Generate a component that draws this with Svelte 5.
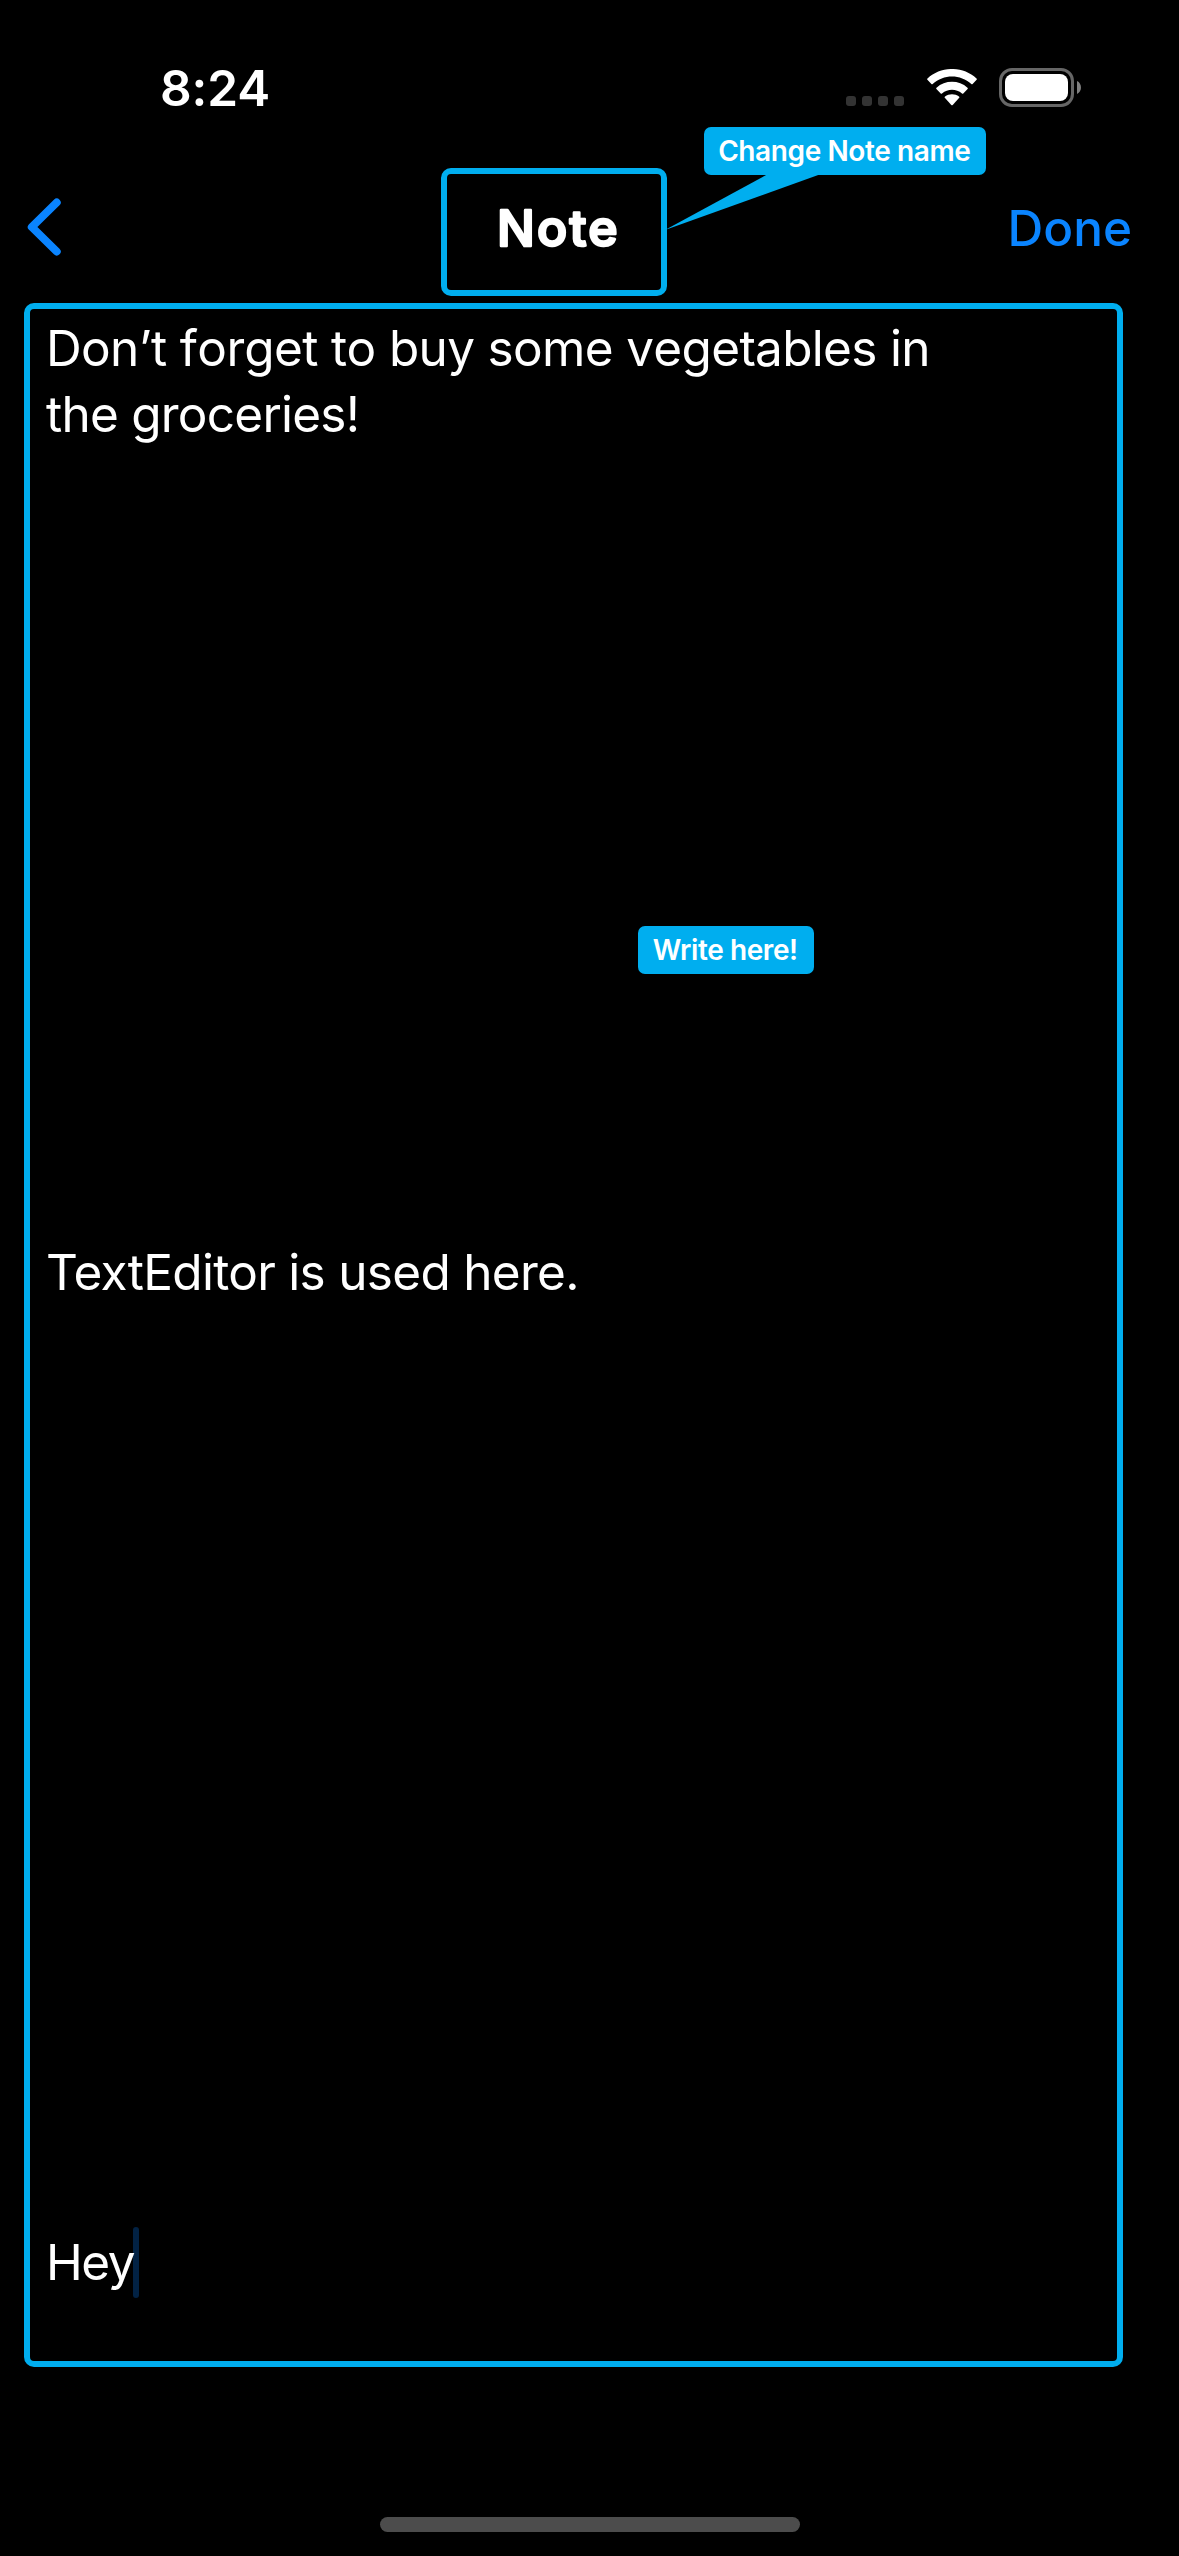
<script>
  const bars = [0, 1, 2, 3];
  // Each entry is one line of the editor; empty strings are blank lines.
  const lines = [
    'Don’t forget to buy some vegetables in',
    'the groceries!',
    ...Array(12).fill(''),
    'TextEditor is used here.',
    ...Array(14).fill(''),
    'Hey'
  ];
  const kinds = { 0: 'first', 1: 'second', 14: 'middle', 29: 'last' };
</script>

<div class="screen">
  <header class="status">
    <time>8:24</time>
    <div class="indicators">
      <div class="dots">
        {#each bars as bar (bar)}<i></i>{/each}
      </div>
      <svg class="wifi" width="50" height="38" viewBox="0 0 50 38" fill="#fff" aria-label="Wi-Fi">
        <path d="M.4 10.8Q-.2 10.2.5 9.5C14-3.2 36-3.2 49.5 9.5Q50.2 10.2 49.6 10.8L45.6 15Q45 15.6 44.3 15C33.5 5 16.5 5 5.7 15Q5 15.6 4.4 15Z" />
        <path d="M9.4 19.9Q8.8 19.3 9.5 18.7C18 10.8 32 10.8 40.5 18.7Q41.2 19.3 40.6 19.9L36.3 24.4Q35.7 25 35 24.4C29.2 19.5 20.8 19.5 15 24.4Q14.3 25 13.7 24.4Z" />
        <path d="M17.8 28.7Q17.2 28 18 27.4C22 24.5 28 24.5 32 27.4Q32.8 28 32.2 28.7L25.7 35.9Q25 36.6 24.3 35.9Z" />
      </svg>
      <svg class="battery" width="83" height="39" viewBox="0 0 83 39" aria-label="Battery">
        <rect x="1.5" y="1.5" width="72" height="36" rx="11.5" fill="none" stroke="#666" stroke-width="3" />
        <rect x="6" y="6" width="63" height="27" rx="8" fill="#fff" />
        <path d="M78 13C83.3 15.300 83.300 23.700 78 26Z" fill="#808080" />
      </svg>
    </div>
  </header>

  <nav>
    <button class="back" aria-label="Back">
      <svg width="40" height="64" viewBox="0 0 40 64">
        <path d="M32.700 7.500 7.800 32 32.700 56.500" fill="none" stroke="#0a84ff" stroke-width="8" stroke-linecap="round" stroke-linejoin="round" />
      </svg>
    </button>
    <h1>
      <svg width="214" height="115" viewBox="0 0 214 115">
        <text x="50" y="71.500" textLength="120.500">Note</text>
      </svg>
    </h1>
    <button class="done">Done</button>
  </nav>

  <main>
    {#each lines as line, i}
      <p><span class={kinds[i] ?? ''}>{line}</span>{#if i === lines.length - 1}<i class="caret"></i>{/if}</p>
    {/each}
  </main>

  <footer><div class="home"></div></footer>

  <svg class="tail" width="156" height="56" viewBox="0 0 156 56">
    <path d="M0 56 103 0H156Z" fill="#00aeef" />
  </svg>
  <div class="tip rename"><span>Change Note name</span></div>
  <div class="tip write"><span>Write here!</span></div>
</div>

<style>
  :global(body) {
    background: #000;
  }
  .screen {
    position: relative;
    box-sizing: border-box;
    display: flex;
    flex-direction: column;
    width: 1179px;
    height: 2556px;
    overflow: hidden;
    background: #000;
    color: #fff;
    font-family: Inter, 'Liberation Sans', sans-serif;
    font-size: 49.5px;
  }
  .status {
    display: flex;
    justify-content: space-between;
    height: 168px;
    box-sizing: border-box;
    padding: 68px 97px 0 160px;
  }
  time {
    height: 40px;
    line-height: 40px;
    font-weight: 600;
    letter-spacing: -0.1px;
  }
  .indicators {
    display: flex;
    align-items: flex-start;
  }
  .dots {
    display: flex;
    gap: 6px;
    padding-top: 28px;
    margin-right: 22.500px;
  }
  .dots i {
    width: 10px;
    height: 10px;
    border-radius: 3px;
    background: #333;
  }
  .wifi {
    margin-top: 1px;
    margin-right: 22.500px;
  }
  nav {
    display: grid;
    grid-template-columns: 417px 226px 1fr;
    height: 128px;
    padding: 0 47px 0 24px;
  }
  button {
    padding: 0;
    border: 0;
    background: none;
    color: #0a84ff;
    font: inherit;
  }
  .back {
    display: flex;
    align-items: flex-start;
    padding-top: 26.500px;
  }
  h1 {
    display: flex;
    box-sizing: border-box;
    margin: 0;
    border: 6px solid #00aeef;
    border-radius: 10px;
  }
  h1 text {
    fill: #fff;
    stroke: #fff;
    stroke-width: 2.500px;
    stroke-linejoin: round;
    font-size: 50px;
    font-weight: 500;
  }
  .done {
    display: flex;
    justify-content: flex-end;
    height: 60px;
    line-height: 60px;
    padding-top: 30px;
    font-weight: 500;
  }
  main {
    box-sizing: border-box;
    width: 1099px;
    height: 2064px;
    margin: 7px 0 0 24px;
    padding: 6px 16px;
    border: 6px solid #00aeef;
    border-radius: 10px;
  }
  p {
    display: flex;
    align-items: center;
    height: 66px;
    margin: 0;
    line-height: 66px;
    white-space: nowrap;
  }
  .first {
    font-kerning: none;
    letter-spacing: -0.66px;
  }
  .second {
    letter-spacing: -0.76px;
  }
  .middle {
    letter-spacing: -0.7px;
  }
  .last {
    position: relative;
    z-index: 1;
    letter-spacing: -1.5px;
  }
  .caret {
    width: 6px;
    height: 71px;
    flex: none;
    margin-left: -1.500px;
    border-radius: 3px;
    background: #022244;
  }
  footer {
    display: flex;
    justify-content: center;
    padding-top: 150px;
  }
  .home {
    width: 420px;
    height: 15px;
    border-radius: 8px;
    background: #4c4c4c;
  }
  .tail {
    position: absolute;
    left: 665px;
    top: 174px;
  }
  .tip {
    position: absolute;
    display: flex;
    align-items: center;
    justify-content: center;
    height: 48px;
    border-radius: 7px;
    background: #00aeef;
    font-size: 28px;
    font-weight: 600;
    letter-spacing: -0.4px;
    white-space: nowrap;
  }
  .tip span {
    margin-left: -1.500px;
  }
  .rename {
    left: 704px;
    top: 127px;
    width: 282px;
  }
  .write {
    left: 638px;
    top: 926px;
    width: 176px;
  }
</style>
